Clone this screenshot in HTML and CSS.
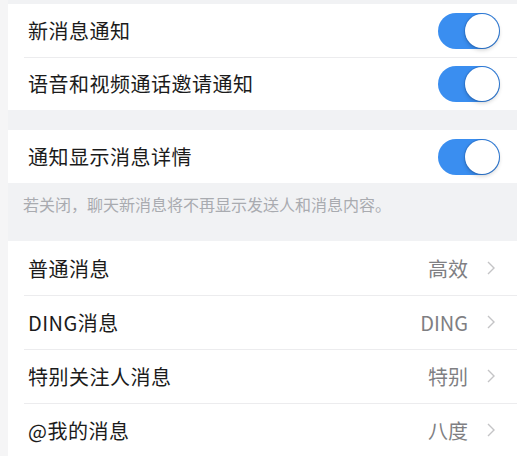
FILE: index.html
```html
<!DOCTYPE html>
<html lang="zh-CN">
<head>
<meta charset="utf-8">
<link rel="stylesheet" href="styles.css">
</head>
<body>
<div class="page">
  <section class="card card-first">
    <div class="row">
      <span class="label">新消息通知</span>
      <span class="toggle on"><span class="knob"></span></span>
    </div>
    <div class="row">
      <span class="label">语音和视频通话邀请通知</span>
      <span class="toggle on"><span class="knob"></span></span>
    </div>
  </section>

  <section class="card card-second">
    <div class="row">
      <span class="label">通知显示消息详情</span>
      <span class="toggle on"><span class="knob"></span></span>
    </div>
  </section>
  <p class="hint">若关闭，聊天新消息将不再显示发送人和消息内容。</p>

  <section class="card card-third">
    <div class="row row-tall">
      <span class="label">普通消息</span>
      <span class="value">高效</span>
      <svg class="chev" viewBox="0 0 8 14" width="8" height="14"><path d="M1 1 L7 7 L1 13" fill="none" stroke="#c4c4c6" stroke-width="1.4"/></svg>
    </div>
    <div class="row row-tall">
      <span class="label">DING消息</span>
      <span class="value">DING</span>
      <svg class="chev" viewBox="0 0 8 14" width="8" height="14"><path d="M1 1 L7 7 L1 13" fill="none" stroke="#c4c4c6" stroke-width="1.4"/></svg>
    </div>
    <div class="row row-tall">
      <span class="label">特别关注人消息</span>
      <span class="value">特别</span>
      <svg class="chev" viewBox="0 0 8 14" width="8" height="14"><path d="M1 1 L7 7 L1 13" fill="none" stroke="#c4c4c6" stroke-width="1.4"/></svg>
    </div>
    <div class="row row-tall">
      <span class="label">@我的消息</span>
      <span class="value">八度</span>
      <svg class="chev" viewBox="0 0 8 14" width="8" height="14"><path d="M1 1 L7 7 L1 13" fill="none" stroke="#c4c4c6" stroke-width="1.4"/></svg>
    </div>
  </section>
</div>
</body>
</html>
```

FILE: styles.css
```css
html, body {
  margin: 0;
  padding: 0;
  background: #f5f5f6;
  font-family: "Noto Sans CJK SC", "Noto Sans", sans-serif;
}

.page {
  margin-left: 8px;
  background: #f1f2f4;
  padding-top: 4px;
  height: 452px;
  overflow: hidden;
}

.card {
  background: #ffffff;
}

.card-second {
  margin-top: 20px;
}

.row {
  position: relative;
  height: 53px;
  display: flex;
  align-items: center;
  padding-left: 20px;
  padding-right: 17px;
}

.row + .row::before {
  content: "";
  position: absolute;
  left: 16px;
  right: 0;
  top: 0;
  height: 1px;
  background: #ececee;
}

.row-tall {
  height: 54px;
}

.label {
  flex: 1;
  font-size: 20px;
  color: #1b1b1b;
  letter-spacing: 0.5px;
}

.value {
  font-size: 20px;
  color: #7f7f83;
  margin-right: 19px;
}

.chev {
  display: block;
  margin-right: 5px;
}

.toggle {
  width: 62px;
  height: 36px;
  border-radius: 18px;
  background: #3a8ef0;
  position: relative;
  flex: none;
}

.toggle .knob {
  position: absolute;
  right: 1px;
  top: 1px;
  width: 34px;
  height: 34px;
  border-radius: 50%;
  background: #ffffff;
  box-shadow: 0 0 0 1px rgba(30, 90, 170, 0.35), 0 2px 4px rgba(0, 0, 0, 0.2);
}

.hint {
  margin: 0;
  height: 58px;
  padding-left: 15px;
  padding-top: 9px;
  box-sizing: border-box;
  font-size: 16px;
  color: #a9abb0;
}
```
